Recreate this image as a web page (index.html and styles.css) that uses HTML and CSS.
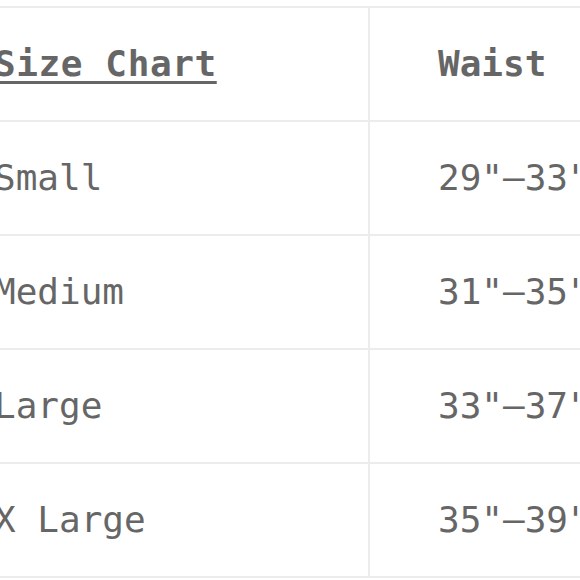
FILE: index.html
```html
<!DOCTYPE html>
<html>
<head>
<meta charset="utf-8">
<link rel="stylesheet" href="styles.css">
</head>
<body>
<div class="frame">
<table class="chart">
  <thead>
    <tr><th class="first"><span class="title">Size Chart</span></th><th>Waist</th></tr>
  </thead>
  <tbody>
    <tr><td class="first">Small</td><td>29"–33"</td></tr>
    <tr><td class="first">Medium</td><td>31"–35"</td></tr>
    <tr><td class="first">Large</td><td>33"–37"</td></tr>
    <tr><td class="first">X Large</td><td>35"–39"</td></tr>
  </tbody>
</table>
</div>
</body>
</html>
```
FILE: styles.css
```css
html, body {
  margin: 0;
  padding: 0;
  background: #fff;
  overflow: hidden;
  width: 580px;
  height: 580px;
}
.frame {
  margin-left: -72px;
  margin-top: 6px;
  width: 1200px;
}
.chart {
  border-collapse: collapse;
  table-layout: fixed;
  width: 880px;
  font-family: "DejaVu Sans Mono", monospace;
  font-size: 36px;
  color: #666;
}
.chart th, .chart td {
  border: 2px solid #ececec;
  height: 114px;
  padding: 0 0 0 68px;
  box-sizing: border-box;
  text-align: left;
  vertical-align: middle;
  line-height: 40px;
  white-space: nowrap;
}
.chart th {
  font-weight: bold;
}
.chart .first {
  width: 440px;
  padding-left: 64px;
}
.title {
  letter-spacing: 0.6px;
  text-decoration: underline;
  text-decoration-thickness: 3px;
  text-underline-offset: 5px;
}
```
